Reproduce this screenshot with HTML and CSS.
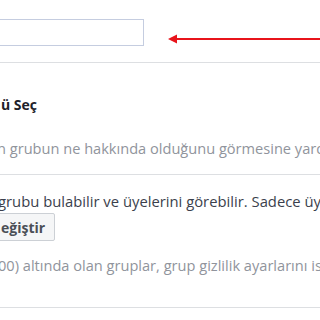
FILE: index.html
```html
<!DOCTYPE html>
<html lang="tr">
<head>
  <meta charset="UTF-8" />
  <title>Grup Ayarları</title>
  <link rel="stylesheet" href="styles.css">
</head>
<body>
  <div class="page">
    <div class="top-row">
      <div class="name-input"></div>
      <div class="arrow">
        <svg width="152" height="10" viewBox="0 0 152 10">
          <polygon points="0,5 9,0.5 9,9.5" fill="#e8141b"/>
          <rect x="8" y="4" width="144" height="2" fill="#e8141b"/>
        </svg>
      </div>
    </div>
    <div class="section">
      <h3 class="title">ü Seç</h3>
      <p class="hint cut-n">n grubun ne hakkında olduğunu görmesine yardımcı olur.</p>
    </div>
    <div class="section">
      <p class="body-text">grubu bulabilir ve üyelerini görebilir. Sadece üyeler gönderileri görebilir.</p>
      <button class="change-btn">eğiştir</button>
      <p class="hint cut-0">00) altında olan gruplar, grup gizlilik ayarlarını istedikleri zaman değiştirebilir.</p>
    </div>
  </div>
</body>
</html>
```

FILE: styles.css
```css
body {
  margin: 0;
  background: #fff;
  font-family: 'Open Sans', 'Liberation Sans', Arial, sans-serif;
  overflow: hidden;
  width: 320px;
  height: 320px;
}
.page {
  width: 320px;
  overflow: hidden;
}
.top-row {
  display: flex;
  align-items: center;
  padding-top: 19px;
  padding-bottom: 16px;
  border-bottom: 1px solid #dddfe2;
}
.name-input {
  width: 146px;
  height: 27px;
  margin-left: -2px;
  border: 1px solid #c5cde0;
  box-sizing: border-box;
  background: #fff;
}
.arrow {
  margin-left: 24px;
  display: flex;
  margin-top: 12px;
}
.section {
  border-bottom: 1px solid #dddfe2;
}
.title {
  margin: 0;
  padding-top: 34px;
  font-size: 14px;
  line-height: 16px;
  font-weight: bold;
  color: #1d2129;
  white-space: nowrap;
  margin-left: 1px;
}
.hint {
  margin: 0;
  font-size: 14.6px;
  line-height: 16px;
  color: #90949c;
  white-space: nowrap;
}
.cut-n {
  margin-top: 27px;
  margin-left: -3px;
  padding-bottom: 18px;
}
.body-text {
  margin: 0;
  margin-top: 18px;
  margin-left: -2px;
  font-size: 14.8px;
  line-height: 16px;
  color: #3b3f4c;
  white-space: nowrap;
}
.change-btn {
  display: block;
  margin-top: 4px;
  margin-left: -10px;
  padding: 0 9px 0 10px;
  height: 28px;
  background: #f5f6f7;
  border: 1px solid #ccd0d5;
  border-radius: 2px;
  font-family: 'Open Sans', 'Liberation Sans', Arial, sans-serif;
  font-size: 14px;
  font-weight: bold;
  color: #4b4f56;
}
.cut-0 {
  margin-top: 16px;
  margin-left: -2px;
  padding-bottom: 34px;
}
```
